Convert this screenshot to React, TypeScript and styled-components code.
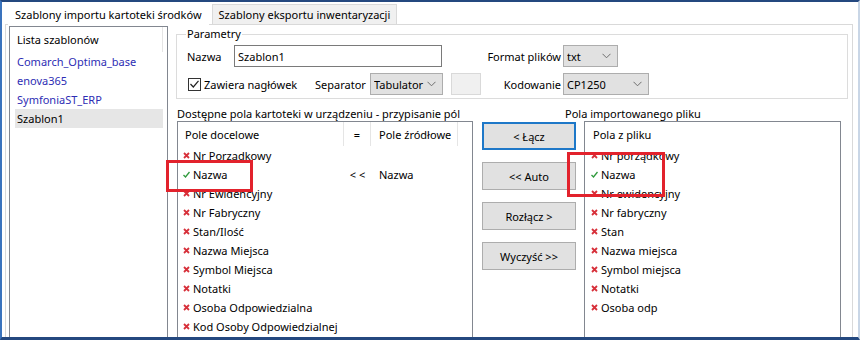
import React from "react";
import styled, { createGlobalStyle } from "styled-components";

const GlobalStyle = createGlobalStyle`
  body {
    margin: 0;
    font-family: "Noto Sans", "Segoe UI", sans-serif;
    font-size: 11px;
    color: #000;
    background: #fff;
  }
  svg {
    flex-shrink: 0;
  }
`;

const Frame = styled.div`
  width: 860px;
  height: 340px;
  box-sizing: border-box;
  border-top: 2px solid #24487f;
  border-bottom: 3px solid #24487f;
  border-left: 2px solid #3a73bd;
  border-right: 2px solid #c9d6e6;
  background: #fff;
  overflow: hidden;
  display: flex;
  flex-direction: column;
`;

const TabBar = styled.div`
  display: flex;
  align-items: flex-end;
  height: 22px;
  padding-left: 6px;
`;

const Tab = styled.div<{ $active?: boolean }>`
  box-sizing: border-box;
  height: ${(p) => (p.$active ? "22px" : "20px")};
  padding: 0 6px;
  margin-right: ${(p) => (p.$active ? "3px" : "0")};
  display: flex;
  align-items: center;
  background: ${(p) => (p.$active ? "#fff" : "#f0f0f0")};
  border: 1px solid ${(p) => (p.$active ? "#fff" : "#d9d9d9")};
  border-bottom: none;
  white-space: nowrap;
  position: relative;
  z-index: 1;
  margin-bottom: ${(p) => (p.$active ? "-1px" : "0")};
`;

const TabPanel = styled.div`
  flex: 1;
  margin: 0 5px 0 3px;
  border: 1px solid #d9d9d9;
  border-bottom: none;
  display: flex;
  padding: 1px 0 0 3px;
  min-height: 0;
`;

const TemplateList = styled.div`
  width: 159px;
  height: 330px;
  box-sizing: border-box;
  border: 1px solid #828790;
  flex-shrink: 0;
`;

const ListHeader = styled.div`
  height: 25px;
  display: flex;
  align-items: center;
  padding-left: 7px;
  margin-right: 4px;
  border-right: 1px solid #e5e5e5;
`;

const TemplateItem = styled.div<{ $selected?: boolean; $builtin?: boolean }>`
  height: 19px;
  line-height: 19px;
  margin: 0 4px 0 5px;
  padding-left: 2px;
  color: ${(p) => (p.$builtin ? "#2d2db4" : "#000")};
  background: ${(p) => (p.$selected ? "#e6e6e6" : "transparent")};
`;

const Main = styled.div`
  margin-left: 8px;
  width: 672px;
  display: flex;
  flex-direction: column;
`;

const GroupBox = styled.fieldset`
  margin: 0;
  padding: 0 10px 3px 10px;
  border: 1px solid #dcdcdc;
  min-width: 0;
`;

const Legend = styled.legend`
  padding: 0 1px;
  margin-left: -1px;
  line-height: 16px;
`;

const ParamRow = styled.div<{ $top: number }>`
  display: flex;
  align-items: center;
  height: 22px;
  margin-top: ${(p) => p.$top}px;
`;

const FieldLabel = styled.span<{ $width: number; $gap?: number; $right?: boolean }>`
  width: ${(p) => p.$width}px;
  margin-left: ${(p) => p.$gap ?? 0}px;
  text-align: ${(p) => (p.$right ? "right" : "left")};
  padding-right: ${(p) => (p.$right ? "2px" : "0")};
  box-sizing: border-box;
  white-space: nowrap;
  flex-shrink: 0;
`;

const TextInput = styled.div`
  width: 208px;
  height: 22px;
  box-sizing: border-box;
  border: 1px solid #7a7a7a;
  padding-left: 3px;
  display: flex;
  align-items: center;
`;

const Select = styled.div<{ $width: number; $gap?: number }>`
  width: ${(p) => p.$width}px;
  margin-left: ${(p) => p.$gap ?? 0}px;
  height: 22px;
  box-sizing: border-box;
  border: 1px solid #adadad;
  background: #e1e1e1;
  display: flex;
  align-items: center;
  padding: 0 6px 0 3px;
  flex-shrink: 0;
  overflow: hidden;
`;

const SelectText = styled.span`
  flex: 1;
  overflow: hidden;
  white-space: nowrap;
`;

const BlankBox = styled.div`
  width: 30px;
  height: 22px;
  margin-left: 8px;
  box-sizing: border-box;
  border: 1px solid #d9d9d9;
  background: #f0f0f0;
  flex-shrink: 0;
`;

const CheckWrap = styled.label`
  width: 127px;
  margin-left: 1px;
  display: flex;
  align-items: center;
  gap: 3px;
  flex-shrink: 0;
`;

const CheckBox = styled.span`
  width: 13px;
  height: 13px;
  box-sizing: border-box;
  border: 1px solid #333;
  background: #fff;
  display: flex;
  align-items: center;
  justify-content: center;
`;

const Captions = styled.div`
  display: flex;
  margin-top: 7px;
  line-height: 15px;
`;

const Caption = styled.span<{ $width?: number }>`
  width: ${(p) => (p.$width ? `${p.$width}px` : "auto")};
  padding-left: 1px;
  white-space: nowrap;
`;

const MappingArea = styled.div`
  position: relative;
  display: flex;
  align-items: flex-start;
`;

const ListBox = styled.div<{ $width: number; $gap: number }>`
  width: ${(p) => p.$width}px;
  margin-left: ${(p) => p.$gap}px;
  height: 240px;
  box-sizing: border-box;
  border: 1px solid #828790;
  flex-shrink: 0;
`;

const HeaderRow = styled.div`
  display: flex;
  height: 24px;
`;

const HeaderCell = styled.div<{ $width: number; $center?: boolean; $pad?: number }>`
  width: ${(p) => p.$width}px;
  box-sizing: border-box;
  border-right: 1px solid #e5e5e5;
  display: flex;
  align-items: center;
  white-space: nowrap;
  justify-content: ${(p) => (p.$center ? "center" : "flex-start")};
  padding-left: ${(p) => (p.$center ? 0 : p.$pad ?? 7)}px;
`;

const ListHeaderPlain = styled.div`
  height: 24px;
  display: flex;
  align-items: center;
  padding-left: 8px;
`;

const Row = styled.div`
  display: flex;
  height: 19px;
  align-items: center;
`;

const Cell = styled.div<{ $width: number; $center?: boolean; $pad?: number }>`
  width: ${(p) => p.$width}px;
  box-sizing: border-box;
  display: flex;
  align-items: center;
  gap: 3px;
  white-space: nowrap;
  justify-content: ${(p) => (p.$center ? "center" : "flex-start")};
  padding-left: ${(p) => (p.$center ? 0 : p.$pad ?? 5)}px;
`;

const ButtonColumn = styled.div`
  margin-left: 9px;
  width: 94px;
  display: flex;
  flex-direction: column;
  gap: 12px;
  padding-top: 1px;
  flex-shrink: 0;
`;

const Button = styled.div<{ $focused?: boolean }>`
  height: 28px;
  box-sizing: border-box;
  border: ${(p) => (p.$focused ? "2px solid #1e78c8" : "1px solid #adadad")};
  background: #e1e1e1;
  display: flex;
  align-items: center;
  justify-content: center;
`;

const Highlight = styled.div<{ $x: number; $y: number; $w: number; $h: number }>`
  position: absolute;
  left: ${(p) => p.$x}px;
  top: ${(p) => p.$y}px;
  width: ${(p) => p.$w}px;
  height: ${(p) => p.$h}px;
  box-sizing: border-box;
  border: 3px solid #e2222c;
  pointer-events: none;
`;

const Chevron = () => (
  <svg width="9" height="6" viewBox="0 0 9 6">
    <polyline points="0.5,0.8 4.5,4.8 8.5,0.8" fill="none" stroke="#6d6d6d" strokeWidth="1" />
  </svg>
);

const CrossIcon = () => (
  <svg width="7" height="7" viewBox="0 0 7 7">
    <path d="M1 1 L6 6 M6 1 L1 6" stroke="#d7303a" strokeWidth="1.8" />
  </svg>
);

const CheckIcon = () => (
  <svg width="7" height="7" viewBox="0 0 7 7">
    <polyline points="0.5,4 2.5,6 6.5,1" fill="none" stroke="#2f9a3c" strokeWidth="1.3" />
  </svg>
);

const templates = [
  { name: "Comarch_Optima_base", builtin: true },
  { name: "enova365", builtin: true },
  { name: "SymfoniaST_ERP", builtin: true },
  { name: "Szablon1", selected: true },
];

const targetFields = [
  { name: "Nr Porządkowy" },
  { name: "Nazwa", linked: true, source: "Nazwa" },
  { name: "Nr Ewidencyjny" },
  { name: "Nr Fabryczny" },
  { name: "Stan/Ilość" },
  { name: "Nazwa Miejsca" },
  { name: "Symbol Miejsca" },
  { name: "Notatki" },
  { name: "Osoba Odpowiedzialna" },
  { name: "Kod Osoby Odpowiedzialnej" },
];

const fileFields = [
  { name: "Nr porządkowy" },
  { name: "Nazwa", linked: true },
  { name: "Nr ewidencyjny" },
  { name: "Nr fabryczny" },
  { name: "Stan" },
  { name: "Nazwa miejsca" },
  { name: "Symbol miejsca" },
  { name: "Notatki" },
  { name: "Osoba odp" },
];

export default function App() {
  return (
    <Frame>
      <GlobalStyle />
      <TabBar>
        <Tab $active>Szablony importu kartoteki środków</Tab>
        <Tab>Szablony eksportu inwentaryzacji</Tab>
      </TabBar>
      <TabPanel>
        <TemplateList>
          <ListHeader>Lista szablonów</ListHeader>
          {templates.map((t) => (
            <TemplateItem key={t.name} $builtin={t.builtin} $selected={t.selected}>
              {t.name}
            </TemplateItem>
          ))}
        </TemplateList>

        <Main>
          <GroupBox>
            <Legend>Parametry</Legend>
            <ParamRow $top={3}>
              <FieldLabel $width={47}>Nazwa</FieldLabel>
              <TextInput>Szablon1</TextInput>
              <FieldLabel $width={79} $gap={42} $right>
                Format plików
              </FieldLabel>
              <Select $width={55}>
                <SelectText>txt</SelectText>
                <Chevron />
              </Select>
            </ParamRow>
            <ParamRow $top={6}>
              <CheckWrap>
                <CheckBox>
                  <svg width="9" height="8" viewBox="0 0 9 8">
                    <polyline points="0.5,4 3.3,7 8.5,0.8" fill="none" stroke="#222" strokeWidth="1.2" />
                  </svg>
                </CheckBox>
                Zawiera nagłówek
              </CheckWrap>
              <FieldLabel $width={55}>Separator</FieldLabel>
              <Select $width={73}>
                <SelectText>Tabulator</SelectText>
                <Chevron />
              </Select>
              <BlankBox />
              <FieldLabel $width={82} $gap={0} $right>
                Kodowanie
              </FieldLabel>
              <Select $width={86}>
                <SelectText>CP1250</SelectText>
                <Chevron />
              </Select>
            </ParamRow>
          </GroupBox>

          <Captions>
            <Caption $width={387}>Dostępne pola kartoteki w urządzeniu - przypisanie pól</Caption>
            <Caption>Pola importowanego pliku</Caption>
          </Captions>

          <MappingArea>
            <ListBox $width={296} $gap={1}>
              <HeaderRow>
                <HeaderCell $width={166}>Pole docelowe</HeaderCell>
                <HeaderCell $width={27} $center>
                  =
                </HeaderCell>
                <HeaderCell $width={87} $pad={8}>
                  Pole źródłowe
                </HeaderCell>
              </HeaderRow>
              {targetFields.map((f) => (
                <Row key={f.name}>
                  <Cell $width={166}>
                    {f.linked ? <CheckIcon /> : <CrossIcon />}
                    {f.name}
                  </Cell>
                  <Cell $width={27} $center>
                    {f.linked ? "< <" : ""}
                  </Cell>
                  <Cell $width={87} $pad={8}>
                    {f.source ?? ""}
                  </Cell>
                </Row>
              ))}
            </ListBox>

            <ButtonColumn>
              <Button $focused>&lt; Łącz</Button>
              <Button>&lt;&lt; Auto</Button>
              <Button>Rozłącz &gt;</Button>
              <Button>Wyczyść &gt;&gt;</Button>
            </ButtonColumn>

            <ListBox $width={257} $gap={8}>
              <ListHeaderPlain>Pola z pliku</ListHeaderPlain>
              {fileFields.map((f) => (
                <Row key={f.name}>
                  <Cell $width={250} $pad={6}>
                    {f.linked ? <CheckIcon /> : <CrossIcon />}
                    {f.name}
                  </Cell>
                </Row>
              ))}
            </ListBox>

            <Highlight $x={-10} $y={39} $w={87} $h={32} />
            <Highlight $x={391} $y={31} $w={98} $h={45} />
          </MappingArea>
        </Main>
      </TabPanel>
    </Frame>
  );
}
